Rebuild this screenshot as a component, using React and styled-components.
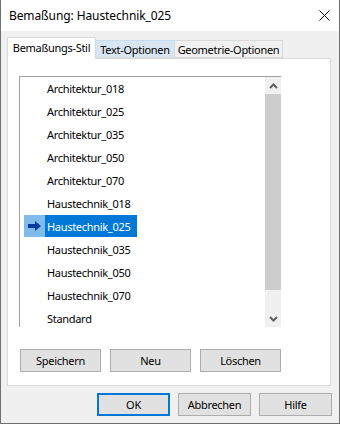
import React from "react";
import styled, { createGlobalStyle } from "styled-components";

const GlobalStyle = createGlobalStyle`
  html, body { margin: 0; padding: 0; background: #fff; }
  body { font-family: "Noto Sans", "Segoe UI", sans-serif; font-size: 11px; color: #000; }
  * { box-sizing: border-box; }
`;

const UI_FONT = `
  font-family: "Noto Sans", sans-serif;
  font-size: 11px;
  letter-spacing: -0.3px;
`;

const Window = styled.div`
  width: 340px;
  height: 424px;
  border: 1px solid #717171;
  border-top: none;
  background: #f0f0f0;
  display: flex;
  flex-direction: column;
`;

const TitleBar = styled.div`
  height: 31px;
  background: #fff;
  display: flex;
  align-items: center;
  justify-content: space-between;
  padding: 0 9px 0 8px;
  flex: none;
`;

const Title = styled.span`
  font-family: "Noto Sans", sans-serif;
  font-size: 12px;
  letter-spacing: -0.1px;
`;

const Body = styled.div`
  flex: 1;
  display: flex;
  flex-direction: column;
  padding: 6px 8px 0 6px;
`;

const TabRow = styled.div`
  display: flex;
  align-items: flex-end;
  height: 22px;
  margin-bottom: -1px;
  position: relative;
  z-index: 1;
`;

const Tab = styled.div`
  ${UI_FONT}
  width: ${(p) => p.$w}px;
  height: ${(p) => (p.$active ? 22 : 18)}px;
  margin-bottom: ${(p) => (p.$active ? 0 : 1)}px;
  margin-left: ${(p) => (p.$first ? 0 : -1)}px;
  background: ${(p) => (p.$active ? "#fff" : p.$hover ? "#d8e6f2" : "#f0f0f0")};
  border: 1px solid ${(p) => (p.$hover ? "#c6dcef" : "#d9d9d9")};
  border-bottom: ${(p) => (p.$active ? "none" : "1px solid #d9d9d9")};
  display: flex;
  align-items: center;
  justify-content: center;
  padding-bottom: ${(p) => (p.$active ? 3 : 0)}px;
  white-space: nowrap;
`;

const Panel = styled.div`
  background: #fff;
  border: 1px solid #d9d9d9;
  width: 324px;
  height: 328px;
  padding: 17px 0 0 11px;
  display: flex;
  flex-direction: column;
`;

const ListBox = styled.div`
  width: 262px;
  height: 251px;
  border-top: 1px solid #a0a0a0;
  border-left: 1px solid #a0a0a0;
  display: flex;
  overflow: hidden;
`;

const Items = styled.div`
  flex: 1;
  overflow: hidden;
`;

const Row = styled.div`
  height: 23px;
  display: flex;
  align-items: flex-start;
  padding-left: 4px;
`;

const ArrowCell = styled.div`
  width: 21px;
  height: 22px;
  display: flex;
  align-items: center;
  justify-content: center;
  background: ${(p) => (p.$on ? "#80bbeb" : "transparent")};
`;

const Label = styled.div`
  ${UI_FONT}
  height: 22px;
  display: flex;
  align-items: center;
  padding: 1px 7px 0 2px;
  background: ${(p) => (p.$on ? "#0078d7" : "transparent")};
  color: ${(p) => (p.$on ? "#fff" : "#000")};
  white-space: nowrap;
`;

const ScrollBar = styled.div`
  width: 16px;
  background: #f0f0f0;
  display: flex;
  flex-direction: column;
  flex: none;
`;

const ScrollBtn = styled.div`
  height: 17px;
  display: flex;
  align-items: center;
  justify-content: center;
  flex: none;
`;

const Thumb = styled.div`
  height: 196px;
  background: #cdcdcd;
  flex: none;
`;

const Track = styled.div`
  flex: 1;
`;

const ButtonRow = styled.div`
  display: flex;
  gap: 9px;
  margin-top: 22px;
  padding-left: 1px;
`;

const Button = styled.button`
  ${UI_FONT}
  width: ${(p) => p.$w || 81}px;
  height: 23px;
  background: #e1e1e1;
  border: ${(p) => (p.$default ? "2px solid #0078d7" : "1px solid #adadad")};
  color: #000;
  padding: 0;
  display: flex;
  align-items: center;
  justify-content: center;
`;

const Footer = styled.div`
  display: flex;
  justify-content: flex-end;
  gap: 8px;
  padding-top: 7px;
  margin-right: -1px;
`;

const items = [
  "Architektur_018",
  "Architektur_025",
  "Architektur_035",
  "Architektur_050",
  "Architektur_070",
  "Haustechnik_018",
  "Haustechnik_025",
  "Haustechnik_035",
  "Haustechnik_050",
  "Haustechnik_070",
  "Standard",
];

const Arrow = () => (
  <svg width="13" height="10" viewBox="0 0 13 10">
    <path d="M0 3 H7 V0 L13 5 L7 10 V7 H0 Z" fill="#0a3a9c" />
  </svg>
);

const Chevron = ({ down }) => (
  <svg width="9" height="6" viewBox="0 0 9 6">
    <polyline
      points={down ? "1,1 4.5,4.5 8,1" : "1,5 4.5,1.5 8,5"}
      fill="none"
      stroke="#606060"
      strokeWidth="2"
    />
  </svg>
);

const CloseIcon = () => (
  <svg width="11" height="11" viewBox="0 0 11 11">
    <path d="M0.5 0.5 L10.5 10.5 M10.5 0.5 L0.5 10.5" stroke="#000" strokeWidth="1" />
  </svg>
);

export default function App() {
  const selected = "Haustechnik_025";
  return (
    <>
      <GlobalStyle />
      <Window>
        <TitleBar>
          <Title>Bemaßung: Haustechnik_025</Title>
          <CloseIcon />
        </TitleBar>
        <Body>
          <TabRow>
            <Tab $active $first $w={89}>Bemaßungs-Stil</Tab>
            <Tab $hover $w={80}>Text-Optionen</Tab>
            <Tab $w={109}>Geometrie-Optionen</Tab>
          </TabRow>
          <Panel>
            <ListBox>
              <Items>
                {items.map((it) => {
                  const on = it === selected;
                  return (
                    <Row key={it}>
                      <ArrowCell $on={on}>{on && <Arrow />}</ArrowCell>
                      <Label $on={on}>{it}</Label>
                    </Row>
                  );
                })}
              </Items>
              <ScrollBar>
                <ScrollBtn>
                  <Chevron />
                </ScrollBtn>
                <Thumb />
                <Track />
                <ScrollBtn>
                  <Chevron down />
                </ScrollBtn>
              </ScrollBar>
            </ListBox>
            <ButtonRow>
              <Button>Speichern</Button>
              <Button>Neu</Button>
              <Button>Löschen</Button>
            </ButtonRow>
          </Panel>
          <Footer>
            <Button $default $w={73}>OK</Button>
            <Button $w={73}>Abbrechen</Button>
            <Button $w={73}>Hilfe</Button>
          </Footer>
        </Body>
      </Window>
    </>
  );
}
